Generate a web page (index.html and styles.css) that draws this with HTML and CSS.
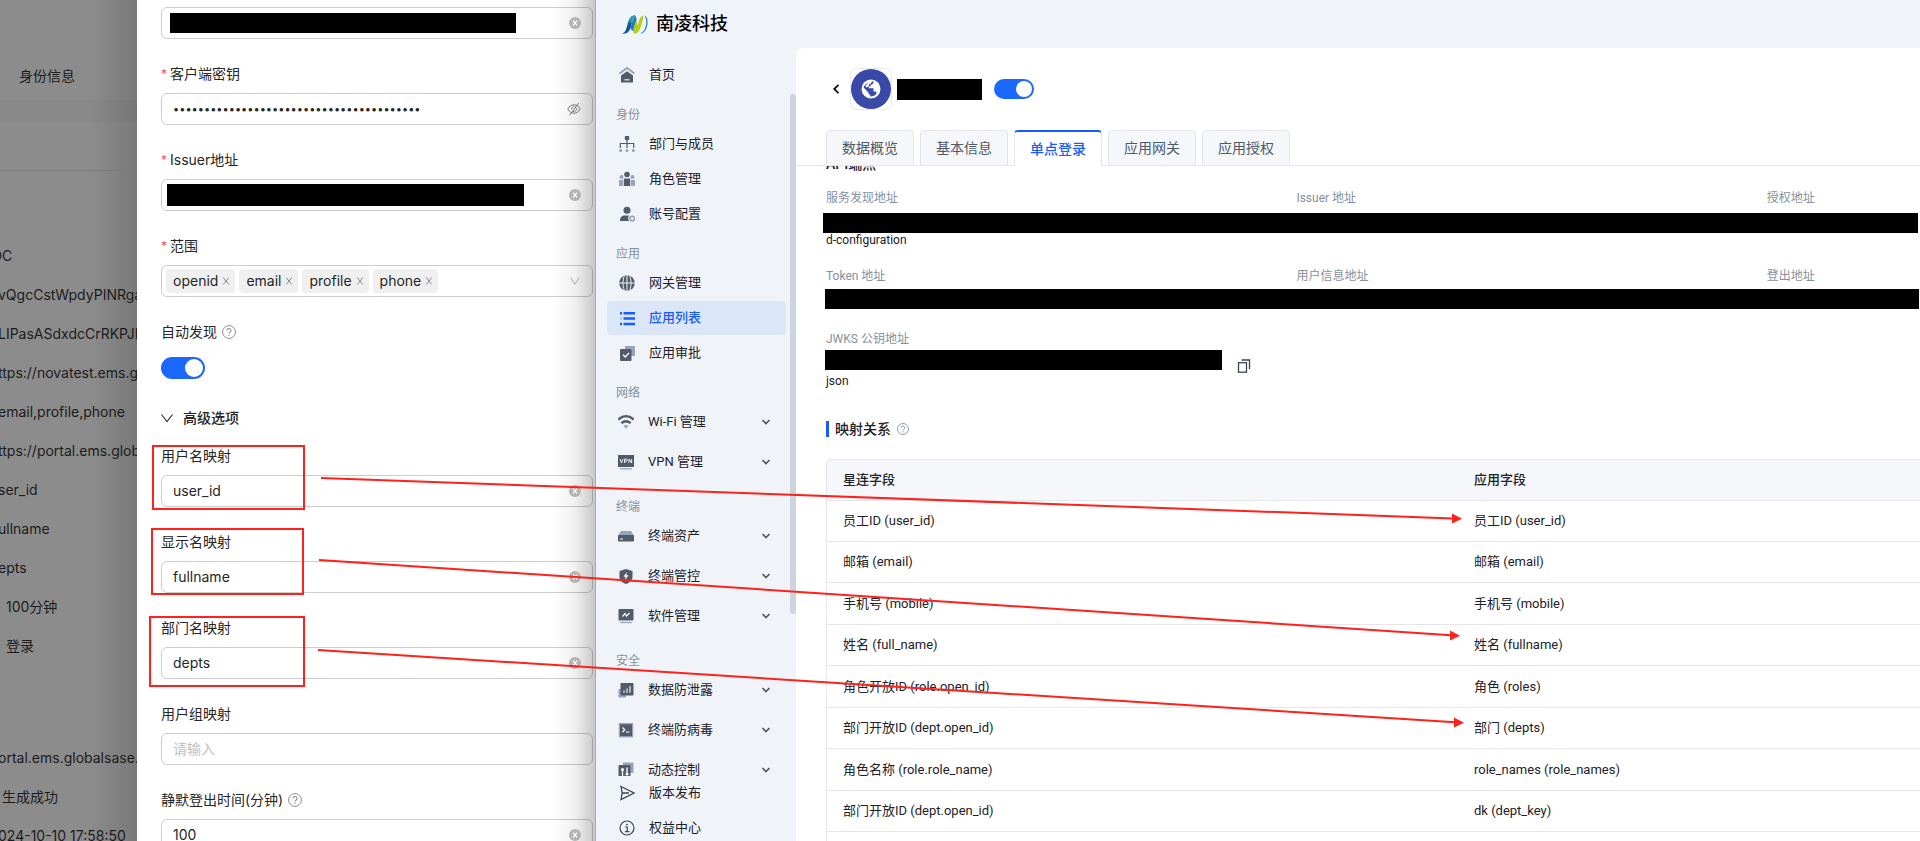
FILE: index.html
```
<!DOCTYPE html>
<html lang="zh-CN">
<head>
<meta charset="utf-8">
<title>南凌科技 - 单点登录</title>
<link rel="stylesheet" href="styles.css">
</head>
<body>
<svg width="0" height="0" class="sprite" aria-hidden="true">
  <symbol id="i-clear" viewBox="0 0 12 12"><circle cx="6" cy="6" r="6" fill="#b4b4b4"/><path d="M4 3.6 8 8.4M8 3.6 4 8.4" stroke="#fff" stroke-width="1.2" fill="none"/></symbol>
  <symbol id="i-help" viewBox="0 0 14 14"><circle cx="7" cy="7" r="6.4" fill="none" stroke="currentColor"/><path d="M5 5.6a2 2 0 1 1 2.9 1.7c-.6.3-.9.6-.9 1.3" fill="none" stroke="currentColor" stroke-width="1.1"/><circle cx="7" cy="10.2" r=".7" fill="currentColor"/></symbol>
  <symbol id="i-down" viewBox="0 0 10 10"><path d="M1.5 3 5 6.6 8.500 3" fill="none" stroke="#4e5663" stroke-width="1.6"/></symbol>
  <symbol id="i-x" viewBox="0 0 8 8"><path d="M1.200 .5 6.800 7.500M6.800 .5 1.200 7.500" fill="none" stroke="#8a8a8a"/></symbol>
</svg>

<div class="page">
  <aside class="backdrop">
    <div class="backdrop-tab">身份信息</div>
    <div class="backdrop-band"></div>
    <div class="backdrop-rule"></div>
    <ul class="backdrop-list">
      <li class="cut">DC</li>
      <li>vQgcCstWpdyPINRga</li>
      <li>LIPasASdxdcCrRKPJBs</li>
      <li>ttps://novatest.ems.gl</li>
      <li>email,profile,phone</li>
      <li>ttps://portal.ems.glob</li>
      <li>ser_id</li>
      <li>ullname</li>
      <li>epts</li>
      <li class="indent">100分钟</li>
      <li class="indent">登录</li>
      <li class="after-gap">ortal.ems.globalsase.c</li>
      <li class="nudge">生成成功</li>
      <li>024-10-10 17:58:50</li>
    </ul>
  </aside>

  <form class="drawer">
    <div class="item item-bare">
      <div class="field masked">
        <input class="redacted redacted-id" aria-label="客户端ID" readonly>
        <button type="button" class="icon-btn" aria-label="清除"><svg class="s12"><use href="#i-clear"/></svg></button>
      </div>
    </div>
    <div class="item">
      <label for="secret"><i class="req">*</i>客户端密钥</label>
      <div class="field">
        <input id="secret" class="dots" type="password" value="abcdefghijabcdefghijabcdefghijabcdefghij">
        <button type="button" class="icon-btn" aria-label="显示"><svg class="s14" viewBox="0 0 14 14" fill="none" stroke="#777"><path d="M.8 7C2.300 4.200 4.400 2.800 7 2.800S11.700 4.200 13.200 7C11.700 9.800 9.600 11.200 7 11.200S2.300 9.800.8 7ZM11.800 1 2.600 13.200"/><path d="M9.200 6A2.400 2.400 0 0 1 6 9.200M4.800 7.600A2.300 2.300 0 0 1 7.600 4.700"/></svg></button>
      </div>
    </div>
    <div class="item">
      <label for="issuer"><i class="req">*</i>Issuer地址</label>
      <div class="field masked-wide">
        <input id="issuer" class="redacted redacted-issuer" readonly>
        <button type="button" class="icon-btn" aria-label="清除"><svg class="s12"><use href="#i-clear"/></svg></button>
      </div>
    </div>
    <div class="item">
      <span class="label"><i class="req">*</i>范围</span>
      <div class="field tags">
        <span class="tag">openid<button type="button" aria-label="移除 openid"><svg class="s8"><use href="#i-x"/></svg></button></span>
        <span class="tag">email<button type="button" aria-label="移除 email"><svg class="s8"><use href="#i-x"/></svg></button></span>
        <span class="tag">profile<button type="button" aria-label="移除 profile"><svg class="s8"><use href="#i-x"/></svg></button></span>
        <span class="tag">phone<button type="button" aria-label="移除 phone"><svg class="s8"><use href="#i-x"/></svg></button></span>
        <button type="button" class="icon-btn" aria-label="展开"><svg class="s12" viewBox="0 0 12 12"><path d="M1.500 2.500 6 9 10.500 2.500" fill="none" stroke="#b5b5b5" stroke-width="1.100"/></svg></button>
      </div>
    </div>
    <div class="item">
      <label for="auto">自动发现<svg class="s14 help"><use href="#i-help"/></svg></label>
      <div class="switch-row"><input id="auto" class="switch switch-lg" type="checkbox" role="switch" checked></div>
    </div>
    <button type="button" class="advanced"><svg class="s12" viewBox="0 0 12 12"><path d="M.5 2.500 6 9.500 11.500 2.500" fill="none" stroke="#333" stroke-width="1.200"/></svg>高级选项</button>
    <div class="item">
      <label for="m-user">用户名映射</label>
      <div class="field"><input id="m-user" value="user_id"><button type="button" class="icon-btn" aria-label="清除"><svg class="s12"><use href="#i-clear"/></svg></button></div>
    </div>
    <div class="item">
      <label for="m-name">显示名映射</label>
      <div class="field"><input id="m-name" value="fullname"><button type="button" class="icon-btn" aria-label="清除"><svg class="s12"><use href="#i-clear"/></svg></button></div>
    </div>
    <div class="item">
      <label for="m-dept">部门名映射</label>
      <div class="field"><input id="m-dept" value="depts"><button type="button" class="icon-btn" aria-label="清除"><svg class="s12"><use href="#i-clear"/></svg></button></div>
    </div>
    <div class="item">
      <label for="m-group">用户组映射</label>
      <div class="field"><input id="m-group" placeholder="请输入"></div>
    </div>
    <div class="item">
      <label for="timeout">静默登出时间(分钟)<svg class="s14 help"><use href="#i-help"/></svg></label>
      <div class="field"><input id="timeout" value="100"><button type="button" class="icon-btn" aria-label="清除"><svg class="s12"><use href="#i-clear"/></svg></button></div>
    </div>
  </form>

  <div class="console">
    <header class="brand">
      <svg class="logo" viewBox="0 0 26 19">
        <path d="M0 18.500C4 18 4.500 12 6.500 6.500 8 2.500 9.500.5 13 .5 11 4 9.800 9 8.500 13 7.200 17 4.500 19.500 0 18.500Z" fill="#14549a"/>
        <path d="M5.500 9C7 3.500 9 .5 13 .5c-1.500 2-2 5-3 8.500C8.500 6 7 6.500 5.500 9Z" fill="#1f9bd3"/>
        <path d="M11.500 18.500c2.500-1 3.500-5 4.500-9C17.500 4 18.500.5 22 .5h-1.500c1.500 1.500 0 5-.9 8.500-1.600 6-3.600 10.500-8.100 9.500Z" fill="#b4cf22"/>
        <path d="M10 6c1 2 .5 9 2 12.300 3 .5 4-3 5-6.300C15 9.500 14 3 13 .8 11.500 2 10.500 4 10 6Z" fill="#b4cf22"/>
        <path d="M8.500 13C9.800 9 11 4 13 .5c1 .8 1.300 2.500 1.600 4.500C12.500 8 12 12 11.200 16 10 15.500 9 14.500 8.500 13Z" fill="#1f7fc0"/>
        <path d="M22 .6c4.500 1 4.500 9 1.500 14.500-1.500 2.700-3.500 3.600-5.500 3.400 3-.7 4.800-3.500 5.900-7.500C24.900 7 24.500 2.500 22 .6Z" fill="#1a72b5"/>
      </svg>
      <h1>南凌科技</h1>
    </header>

    <nav class="sidebar">
      <div class="nav-scroll">
        <a class="nav" href="#"><svg viewBox="0 0 16 16"><path d="M.5 6.500 8 1l7.500 5.500" fill="none" stroke="#98a4ba" stroke-width="2"/><path d="M8 4.200 14 8.500V15.500H2V8.500Z" fill="#535b6b"/><path d="M5.500 12.800h5" stroke="#e8edf4" stroke-width="1.200"/></svg>首页</a>
        <h2>身份</h2>
        <a class="nav" href="#"><svg viewBox="0 0 16 16"><rect x="5.800" y="0" width="4.400" height="4" rx="1" fill="#535b6b"/><path d="M8 4V12M1.300 12V7.500H14.700V12" fill="none" stroke="#535b6b" stroke-width="1.200"/><g fill="#98a4ba"><circle cx="1.600" cy="14.400" r="1.500"/><circle cx="8" cy="14.400" r="1.500"/><circle cx="14.400" cy="14.400" r="1.500"/></g></svg>部门与成员</a>
        <a class="nav" href="#"><svg viewBox="0 0 16 16"><g fill="#98a4ba"><circle cx="2.500" cy="6" r="2"/><circle cx="13.500" cy="6" r="2"/><path d="M0 9h4v6H0zM12 9h4v6h-4z"/></g><circle cx="8" cy="3.500" r="2.800" fill="#535b6b"/><path d="M4.800 7.500h6.400V15H4.800z" fill="#535b6b"/></svg>角色管理</a>
        <a class="nav" href="#"><svg viewBox="0 0 16 16"><circle cx="8" cy="4.200" r="3.500" fill="#535b6b"/><path d="M1 15c0-4 2-5.500 5-5.500h4l-1 2.800L10 15Z" fill="#535b6b"/><circle cx="13.200" cy="12.600" r="2.300" fill="none" stroke="#98a4ba" stroke-width="1.600"/></svg>账号配置</a>
        <h2>应用</h2>
        <a class="nav" href="#"><svg viewBox="0 0 16 16"><circle cx="8" cy="8" r="7.800" fill="#535b6b"/><path d="M8 0V16M5.500.5C3.400 5 3.400 11 5.500 15.500M10.500.5C12.600 5 12.600 11 10.500 15.500M0 8H16" fill="none" stroke="#f0f4f9" stroke-width="1"/></svg>网关管理</a>
        <a class="nav active" href="#"><svg viewBox="0 0 16 16"><path d="M4.500 3.200H16M4.500 8.500H16M4.500 14H16M1 3.200H3M1 14H3" stroke="#165dff" stroke-width="2.400"/><path d="M1 8.500H3" stroke="#a9c6fb" stroke-width="2.400"/></svg>应用列表</a>
        <a class="nav" href="#"><svg viewBox="0 0 16 16"><path d="M6 1H16V11H12V5H6Z" fill="#98a4ba"/><rect x="1" y="4" width="11.500" height="12" rx="1" fill="#535b6b"/><path d="M4 9.800 6.200 12 10 8" fill="none" stroke="#fff" stroke-width="1.300"/></svg>应用审批</a>
        <h2>网络</h2>
        <a class="nav expand" href="#"><svg viewBox="0 0 16 16"><path d="M.3 5.500C5 1.200 11 1.200 15.700 5.500M3.400 9.200C6.200 6.700 9.800 6.700 12.600 9.200" fill="none" stroke="#535b6b" stroke-width="2.400"/><path d="M5.500 11.800C7 10.600 9 10.600 10.500 11.800L8 14.800Z" fill="#98a4ba"/></svg>Wi-Fi 管理<svg class="caret"><use href="#i-down"/></svg></a>
        <a class="nav expand" href="#"><svg viewBox="0 0 16 16"><path d="M0 1H16V13H0Z" fill="#535b6b"/><path d="M2.200 14.800H13.800" stroke="#98a4ba" stroke-width="1.300"/><path d="M2 5l1.500 4L5 5M6.600 9V5h1.500c1.700 0 1.700 2.200 0 2.200H6.600M11 9V5l2.600 4V5" fill="none" stroke="#fff" stroke-width=".9"/></svg>VPN 管理<svg class="caret"><use href="#i-down"/></svg></a>
        <h2>终端</h2>
        <a class="nav expand" href="#"><svg viewBox="0 0 16 16"><path d="M2.800 3H13.200L16 8H0Z" fill="#98a4ba"/><rect y="7" width="16" height="6.500" rx="1" fill="#535b6b"/><path d="M2 11H5" stroke="#fff"/></svg>终端资产<svg class="caret"><use href="#i-down"/></svg></a>
        <a class="nav expand" href="#"><svg viewBox="0 0 16 16"><path d="M8 1 14.500 3V9C14.500 12.500 12 14.500 8 16 4 14.500 1.500 12.500 1.500 9V3Z" fill="#535b6b"/><path d="M8.800 4 5.500 8.800H7.600L7 12.200 10.500 7.300H8.300Z" fill="#fff"/></svg>终端管控<svg class="caret"><use href="#i-down"/></svg></a>
        <a class="nav expand" href="#"><svg viewBox="0 0 16 16"><rect x=".5" y="1" width="15" height="11.500" rx="1" fill="#535b6b"/><path d="M2.200 14.500H13.800" stroke="#98a4ba" stroke-width="1.300"/><path d="M4.500 8.500 7 5.500 8.500 8 11.500 5" fill="none" stroke="#fff" stroke-width="1.200"/></svg>软件管理<svg class="caret"><use href="#i-down"/></svg></a>
        <h2>安全</h2>
        <a class="nav expand" href="#"><svg viewBox="0 0 16 16"><path d="M.5 7H8V15.500H.5Z" fill="#98a4ba"/><rect x="2.500" y="1" width="13" height="12.500" rx="1" fill="#535b6b"/><path d="M6 10.800V8.500M9 10.800V6.500M12 10.800V4" stroke="#e8edf4" stroke-width="1.200"/></svg>数据防泄露<svg class="caret"><use href="#i-down"/></svg></a>
        <a class="nav expand" href="#"><svg viewBox="0 0 16 16"><rect x=".8" y="1" width="14.400" height="14.400" fill="#98a4ba"/><rect x="2" y="2.300" width="12" height="11.800" fill="#535b6b"/><path d="M4.500 5.500 6.800 7.700 4.500 10M8 10H11.500" fill="none" stroke="#fff" stroke-width="1.200"/></svg>终端防病毒<svg class="caret"><use href="#i-down"/></svg></a>
        <a class="nav expand" href="#"><svg viewBox="0 0 16 16"><path d="M5 .5H15.500V11H12V4H5Z" fill="#98a4ba"/><rect x=".5" y="3" width="12" height="12.500" rx="1" fill="#535b6b"/><path d="M4.500 15V8M9 5.500V12" stroke="#fff" stroke-width="1.300"/><circle cx="4.500" cy="7.500" r="1.500" fill="#fff"/><circle cx="9" cy="12" r="1.500" fill="#fff"/></svg>动态控制<svg class="caret"><use href="#i-down"/></svg></a>
      </div>
      <div class="nav-foot">
        <a class="nav" href="#"><svg viewBox="0 0 16 16"><path d="M2 1.500 15 8 2 14.500 3.200 8ZM3.200 8H10" fill="none" stroke="#3c4350" stroke-width="1.300"/></svg>版本发布</a>
        <a class="nav" href="#"><svg viewBox="0 0 16 16"><circle cx="8" cy="8" r="7" fill="none" stroke="#3c4350" stroke-width="1.200"/><path d="M6.300 7H8.200V11.500M6 11.700H10.400" fill="none" stroke="#3c4350" stroke-width="1.200"/><circle cx="8" cy="4.600" r=".9" fill="#3c4350"/></svg>权益中心</a>
      </div>
      <div class="scrollbar"></div>
    </nav>

    <main class="panel">
      <div class="app-head">
        <button type="button" class="back" aria-label="返回"><svg class="s12" viewBox="0 0 12 12"><path d="M8.500 1.800 4.200 6 8.500 10.200" fill="none" stroke="#111" stroke-width="1.800"/></svg></button>
        <svg class="app-icon" viewBox="0 0 40 40"><circle cx="20" cy="20" r="20" fill="#3949a8"/><circle cx="20" cy="20" r="9.500" fill="#fff"/><path d="M22.500 12C23 14.500 21.500 15.500 19.500 15.800V17.500H17.800V19.300H22.500V22.500H24C25 22.500 25.500 23.300 25.600 24.200 24.200 26.300 22.300 27.500 19.300 27.600V25.800C18 25.600 17.300 24.800 17.400 23.500L12.600 18.600 13.300 17 16 14.200 19 13.800Z" fill="#3949a8"/><path d="M14.500 17.500C15.500 15 17.500 13.200 20.500 12.800 20.500 14.800 18.500 15 17.800 15.600V17.300L15.800 18.500Z" fill="#fff"/></svg>
        <span class="app-name"></span>
        <input class="switch switch-md" type="checkbox" role="switch" aria-label="启用应用" checked>
      </div>
      <div class="tabs" role="tablist">
        <button role="tab">数据概览</button>
        <button role="tab">基本信息</button>
        <button role="tab" class="current" aria-selected="true">单点登录</button>
        <button role="tab">应用网关</button>
        <button role="tab">应用授权</button>
      </div>
      <div class="detail">
        <h3 class="api-title">API端点</h3>
        <div class="labels"><span>服务发现地址</span><span>Issuer 地址</span><span>授权地址</span></div>
        <div class="bar bar-first"></div>
        <p class="rest">d-configuration</p>
        <div class="labels labels-second"><span>Token 地址</span><span>用户信息地址</span><span>登出地址</span></div>
        <div class="bar"></div>
        <div class="labels labels-third"><span>JWKS 公钥地址</span></div>
        <div class="jwks">
          <div class="jwks-value">
            <div class="bar bar-short"></div>
            <p class="rest">json</p>
          </div>
          <button type="button" class="icon-btn" aria-label="复制"><svg class="s14" viewBox="0 0 14 14" fill="none" stroke="#3c4350" stroke-width="1.300"><rect x="1.500" y="3.700" width="8" height="9.500"/><path d="M4.500 1H12.500V10"/></svg></button>
        </div>
        <h3 class="map-title">映射关系<svg class="s12"><use href="#i-help"/></svg></h3>
        <table>
          <thead><tr><th>星连字段</th><th>应用字段</th></tr></thead>
          <tbody>
            <tr><td>员工ID (user_id)</td><td>员工ID (user_id)</td></tr>
            <tr><td>邮箱 (email)</td><td>邮箱 (email)</td></tr>
            <tr><td>手机号 (mobile)</td><td>手机号 (mobile)</td></tr>
            <tr><td>姓名 (full_name)</td><td>姓名 (fullname)</td></tr>
            <tr><td>角色开放ID (role.open_id)</td><td>角色 (roles)</td></tr>
            <tr><td>部门开放ID (dept.open_id)</td><td>部门 (depts)</td></tr>
            <tr><td>角色名称 (role.role_name)</td><td>role_names (role_names)</td></tr>
            <tr><td>部门开放ID (dept.open_id)</td><td>dk (dept_key)</td></tr>
            <tr><td></td><td></td></tr>
          </tbody>
        </table>
      </div>
    </main>
  </div>

  <svg class="notes" width="1920" height="841" aria-hidden="true">
    <g fill="none" stroke="#ff211b" stroke-width="2">
      <rect x="153" y="446" width="151" height="63"/>
      <rect x="152" y="529" width="151" height="65"/>
      <rect x="150" y="617" width="154" height="69"/>
      <path d="M321 478 1453 518.400M319 560 1451 635.200M318 650 1455 722.200"/>
    </g>
    <path d="M1452 513.500 1462 518.700 1452 523.500ZM1450 630.500 1460 635.700 1450 640.500ZM1454 717.500 1464 722.700 1454 727.500Z" fill="#ff211b"/>
  </svg>
</div>
</body>
</html>
```
FILE: styles.css
```
* { box-sizing: border-box; }
body { margin: 0; overflow: hidden; }
button, input { font: inherit; color: inherit; }
button { border: 0; padding: 0; background: none; }
h1, h2, h3, p, ul { margin: 0; padding: 0; }
a { text-decoration: none; }
ul { list-style: none; }
i { font-style: normal; }
svg { flex: none; display: block; }
.sprite { position: absolute; }
.s8 { width: 8px; height: 8px; }
.s12 { width: 12px; height: 12px; }
.s14 { width: 14px; height: 14px; }

.page {
  position: relative;
  display: grid;
  grid-template-columns: 137px 459px 1fr;
  height: 100vh;
  overflow: hidden;
}

/* dimmed page behind the drawer */
.backdrop {
  overflow: hidden;
  background: linear-gradient(to right, transparent 90px, rgba(0, 0, 0, .14)), #8c8c8c;
  color: #1c1c1c;
  font: 14px/22px Inter, "Noto Sans CJK SC", sans-serif;
  white-space: nowrap;
}
.backdrop-tab { height: 100px; padding: 65px 0 0 19px; }
.backdrop-band { height: 22px; background: rgba(0, 0, 0, .02); }
.backdrop-rule { height: 49px; border-bottom: 1px solid #7b7b7b; }
.backdrop-list { padding-top: 65px; margin-left: -2px; }
.backdrop-list li { height: 39px; line-height: 39px; }
.backdrop-list .cut { text-indent: -6px; }
.backdrop-list .indent { padding-left: 8px; }
.backdrop-list .nudge { padding-left: 4px; }
.backdrop-list .after-gap { margin-top: 73px; }

/* settings drawer */
.drawer {
  overflow: hidden;
  padding: 7px 2px 0 24px;
  background: linear-gradient(to right, transparent 415px, rgba(0, 0, 0, .06) 438px, rgba(0, 0, 0, .22)), #fff;
  border-right: 1px solid #a9adb3;
  color: #262626;
  font: 14px/22px Inter, "Noto Sans CJK SC", sans-serif;
}
.item { margin-bottom: 24px; }
.item label, .item .label { display: flex; align-items: center; height: 22px; margin-bottom: 8px; }
.req { width: 9px; color: #ff4d4f; font-size: 12px; }
.help { margin-left: 5px; color: #8c8c8c; }
.field {
  display: flex;
  align-items: center;
  height: 32px;
  padding: 0 11px;
  border: 1px solid rgba(0, 0, 0, .2);
  border-radius: 6px;
}
.field input { flex: 1; min-width: 0; border: 0; padding: 0; outline: 0; background: none; }
.field input::placeholder { color: #bfbfbf; }
.field .dots { font-size: 11px; }
.field.masked { padding-left: 8px; }
.field.masked-wide { padding-left: 5px; }
.field .redacted { flex: none; background: #000; }
.redacted-id { width: 346px; height: 20px; }
.redacted-issuer { width: 357px; height: 22px; }
.icon-btn { display: flex; margin-left: auto; }
.field.tags { gap: 4px; padding-left: 4px; }
.tag {
  display: flex;
  align-items: center;
  gap: 4px;
  height: 24px;
  padding: 0 5px 0 7px;
  border-radius: 4px;
  background: #f0f0f0;
}
.switch-row { display: flex; align-items: center; height: 32px; padding-top: 1px; }
.switch {
  appearance: none;
  display: flex;
  justify-content: flex-end;
  margin: 0;
  padding: 2px;
  border-radius: 11px;
  background: #1b68ff;
}
.switch::before { content: ""; border-radius: 50%; background: #fff; }
.switch-lg { width: 44px; height: 22px; }
.switch-lg::before { width: 18px; height: 18px; }
.switch-md { width: 40px; height: 20px; margin-left: 12px; }
.switch-md::before { width: 16px; height: 16px; }
.advanced {
  display: flex;
  align-items: center;
  gap: 10px;
  height: 22px;
  margin-bottom: 16px;
  font-weight: 500;
}

/* console window */
.console {
  display: grid;
  grid-template: 48px minmax(0, 1fr) / 200px minmax(0, 1fr);
  min-width: 0;
  height: 100vh;
  background: #f0f4f9;
  color: #1d2129;
  font: 13px/22px Roboto, "Noto Sans CJK SC", sans-serif;
}
.brand { grid-column: 1 / 3; display: flex; align-items: center; gap: 8px; padding-left: 26px; }
.logo { width: 26px; height: 19px; }
.brand h1 { color: #000; font-size: 18px; line-height: 26px; font-weight: 500; }

.sidebar { position: relative; display: flex; flex-direction: column; min-height: 0; padding: 10px 10px 0 11px; }
.nav-scroll { flex: 1; min-height: 0; overflow: hidden; }
.nav-foot { flex: none; height: 65px; overflow: hidden; }
.nav {
  display: flex;
  align-items: center;
  gap: 14px;
  height: 34px;
  margin-bottom: 1px;
  padding: 0 15px 0 12px;
  border-radius: 4px;
  color: #1d2129;
}
.nav svg { width: 16px; height: 16px; }
.nav.active { background: #dbe7f9; color: #165dff; font-weight: 500; }
.nav.expand { margin-bottom: 6px; padding-left: 11px; }
.nav .caret { width: 10px; height: 10px; margin-left: auto; }
.sidebar h2 { height: 34px; padding: 11px 0 0 9px; color: #86909c; font-size: 12px; font-weight: 400; }
.scrollbar { position: absolute; top: 46px; right: 0; width: 6px; height: 520px; border-radius: 3px; background: #ccd4df; }

.panel {
  display: flex;
  flex-direction: column;
  min-width: 0;
  overflow: hidden;
  border-top-left-radius: 8px;
  background: #fff;
}
.app-head { display: flex; align-items: center; padding: 20px 0 20px 34px; }
.back { display: flex; }
.app-icon { width: 42px; height: 42px; margin: 0 5px 0 8px; border: 1px solid #e8eaee; border-radius: 6px; }
.app-name { width: 85px; height: 21px; background: #000; }
.tabs { display: flex; gap: 6px; flex: none; padding-left: 30px; height: 36px; box-shadow: inset 0 -1px #e5e6eb; }
.tabs button {
  height: 36px;
  padding: 0 15px;
  border: 1px solid #e5e6eb;
  border-radius: 4px 4px 0 0;
  background: #f5f7fa;
  color: #4e5969;
  font-size: 14px;
}
.tabs .current { border-top: 2px solid #165dff; border-bottom-color: #fff; background: #fff; color: #165dff; font-weight: 500; }
.detail { flex: 1; min-height: 0; overflow: hidden; padding-left: 30px; }
.api-title { margin-top: -13px; font-size: 14px; font-weight: 500; }
.labels {
  display: grid;
  grid-template-columns: 43fr 43fr 14fr;
  margin: 12px 0 4px;
  color: #86909c;
  font-size: 12px;
}
.bar { height: 20px; margin: 0 1px 0 -1px; background: #000; }
.bar-first { margin: 0 2px 0 -3px; }
.rest { height: 22px; line-height: 14px; font-size: 12px; color: #1d2129; }
.labels-second { margin: 10px 0 2px; }
.labels-third { margin: 19px 0 0; }
.jwks { display: flex; align-items: center; gap: 14px; height: 32px; }
.jwks .icon-btn { margin: 0; }
.jwks-value { align-self: flex-start; }
.jwks .bar { width: 397px; }
.jwks .rest { line-height: 22px; }
.map-title { display: flex; align-items: center; gap: 6px; margin-top: 36px; font-size: 14px; font-weight: 500; line-height: 22px; }
.map-title::before { content: ""; width: 3px; height: 16px; background: #165dff; }
.map-title svg { color: #86909c; }
table {
  width: 100%;
  margin-top: 19px;
  border-collapse: separate;
  border-spacing: 0;
  border: 1px solid #e5e6eb;
  border-right: 0;
  border-top-left-radius: 4px;
}
th, td { height: 41px; padding: 0 16px; border-bottom: 1px solid #e5e6eb; text-align: left; line-height: 20px; }
th { background: #f5f7fa; font-weight: 500; }
th:first-child { width: 631px; }
tbody tr:nth-child(2n+3) td { height: 42px; }

.notes { position: absolute; top: 0; left: 0; pointer-events: none; }
```
